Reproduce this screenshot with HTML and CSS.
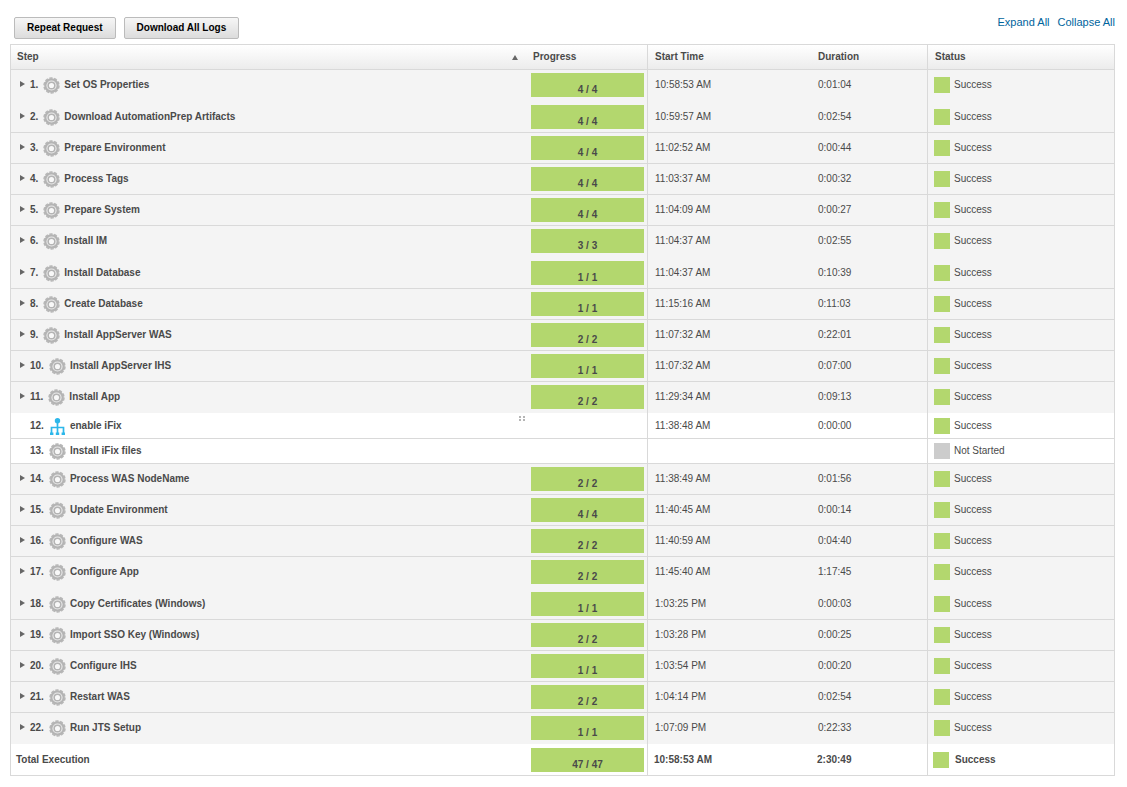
FILE: index.html
```html
<!DOCTYPE html>
<html lang="en">
<head>
<meta charset="utf-8">
<title>Execution</title>
<link rel="stylesheet" href="styles.css">
</head>
<body>
<svg class="sprite" aria-hidden="true">
  <symbol id="gear" viewBox="0 0 17 17">
    <circle cx="8.5" cy="8.5" r="7.5" fill="none" stroke="#b8b8b8" stroke-width="1.5" stroke-dasharray="3.2 1.512"/>
    <circle cx="8.5" cy="8.5" r="6.2" fill="#ebebeb" stroke="#b4b4b4" stroke-width="2.2"/>
    <circle cx="8.5" cy="8.5" r="3.3" fill="#f8f8f8" stroke="#b4b4b4" stroke-width="1.5"/>
  </symbol>
  <symbol id="tree" viewBox="0 0 17 17">
    <circle cx="8.5" cy="2.7" r="2.7" fill="#2db7ea"/>
    <path d="M8.5 5v10M2.5 15V9.5h12V15" fill="none" stroke="#2db7ea" stroke-width="1.7"/>
    <path d="M1 14.5h3.4v2.5H1zM6.8 14.5h3.4v2.5H6.8zM12.6 14.5H16v2.5h-3.4z" fill="#2db7ea"/>
  </symbol>
  <symbol id="arrow" viewBox="0 0 5 6"><path d="M0 0l5 3-5 3z" fill="#666"/></symbol>
</svg>
<main class="page">
  <header class="toolbar">
    <div class="actions">
      <button type="button" class="button">Repeat Request</button>
      <button type="button" class="button">Download All Logs</button>
    </div>
    <nav class="links"><a href="#expand">Expand All</a><a href="#collapse">Collapse All</a></nav>
  </header>
  <table class="grid">
    <colgroup><col><col class="col-progress"><col class="col-start"><col class="col-duration"><col class="col-status"></colgroup>
    <thead>
      <tr>
        <th scope="col"><div class="sortable">Step<svg class="sort" viewBox="0 0 6 5" aria-hidden="true"><path d="M3 0l3 5H0z" fill="#666"/></svg></div></th>
        <th scope="col" class="ruled">Progress</th>
        <th scope="col">Start Time</th>
        <th scope="col" class="ruled">Duration</th>
        <th scope="col">Status</th>
      </tr>
    </thead>
    <tbody>
      <tr class="open"><td><div class="step"><button type="button" class="toggle" aria-label="Expand step 1"><svg><use href="#arrow"/></svg></button><span>1.</span><svg class="icon"><use href="#gear"/></svg><span>Set OS Properties</span></div></td><td class="ruled"><div class="bar">4 / 4</div></td><td>10:58:53 AM</td><td class="ruled">0:01:04</td><td><div class="status">Success</div></td></tr>
      <tr><td><div class="step"><button type="button" class="toggle" aria-label="Expand step 2"><svg><use href="#arrow"/></svg></button><span>2.</span><svg class="icon"><use href="#gear"/></svg><span>Download AutomationPrep Artifacts</span></div></td><td class="ruled"><div class="bar">4 / 4</div></td><td>10:59:57 AM</td><td class="ruled">0:02:54</td><td><div class="status">Success</div></td></tr>
      <tr><td><div class="step"><button type="button" class="toggle" aria-label="Expand step 3"><svg><use href="#arrow"/></svg></button><span>3.</span><svg class="icon"><use href="#gear"/></svg><span>Prepare Environment</span></div></td><td class="ruled"><div class="bar">4 / 4</div></td><td>11:02:52 AM</td><td class="ruled">0:00:44</td><td><div class="status">Success</div></td></tr>
      <tr><td><div class="step"><button type="button" class="toggle" aria-label="Expand step 4"><svg><use href="#arrow"/></svg></button><span>4.</span><svg class="icon"><use href="#gear"/></svg><span>Process Tags</span></div></td><td class="ruled"><div class="bar">4 / 4</div></td><td>11:03:37 AM</td><td class="ruled">0:00:32</td><td><div class="status">Success</div></td></tr>
      <tr><td><div class="step"><button type="button" class="toggle" aria-label="Expand step 5"><svg><use href="#arrow"/></svg></button><span>5.</span><svg class="icon"><use href="#gear"/></svg><span>Prepare System</span></div></td><td class="ruled"><div class="bar">4 / 4</div></td><td>11:04:09 AM</td><td class="ruled">0:00:27</td><td><div class="status">Success</div></td></tr>
      <tr class="open"><td><div class="step"><button type="button" class="toggle" aria-label="Expand step 6"><svg><use href="#arrow"/></svg></button><span>6.</span><svg class="icon"><use href="#gear"/></svg><span>Install IM</span></div></td><td class="ruled"><div class="bar">3 / 3</div></td><td>11:04:37 AM</td><td class="ruled">0:02:55</td><td><div class="status">Success</div></td></tr>
      <tr><td><div class="step"><button type="button" class="toggle" aria-label="Expand step 7"><svg><use href="#arrow"/></svg></button><span>7.</span><svg class="icon"><use href="#gear"/></svg><span>Install Database</span></div></td><td class="ruled"><div class="bar">1 / 1</div></td><td>11:04:37 AM</td><td class="ruled">0:10:39</td><td><div class="status">Success</div></td></tr>
      <tr><td><div class="step"><button type="button" class="toggle" aria-label="Expand step 8"><svg><use href="#arrow"/></svg></button><span>8.</span><svg class="icon"><use href="#gear"/></svg><span>Create Database</span></div></td><td class="ruled"><div class="bar">1 / 1</div></td><td>11:15:16 AM</td><td class="ruled">0:11:03</td><td><div class="status">Success</div></td></tr>
      <tr><td><div class="step"><button type="button" class="toggle" aria-label="Expand step 9"><svg><use href="#arrow"/></svg></button><span>9.</span><svg class="icon"><use href="#gear"/></svg><span>Install AppServer WAS</span></div></td><td class="ruled"><div class="bar">2 / 2</div></td><td>11:07:32 AM</td><td class="ruled">0:22:01</td><td><div class="status">Success</div></td></tr>
      <tr><td><div class="step"><button type="button" class="toggle" aria-label="Expand step 10"><svg><use href="#arrow"/></svg></button><span>10.</span><svg class="icon"><use href="#gear"/></svg><span>Install AppServer IHS</span></div></td><td class="ruled"><div class="bar">1 / 1</div></td><td>11:07:32 AM</td><td class="ruled">0:07:00</td><td><div class="status">Success</div></td></tr>
      <tr class="last"><td><div class="step"><button type="button" class="toggle" aria-label="Expand step 11"><svg><use href="#arrow"/></svg></button><span>11.</span><svg class="icon"><use href="#gear"/></svg><span>Install App</span></div></td><td class="ruled"><div class="bar">2 / 2</div></td><td>11:29:34 AM</td><td class="ruled">0:09:13</td><td><div class="status">Success</div></td></tr>
      <tr class="leaf first"><td><div class="step"><span class="toggle"></span><span>12.</span><svg class="icon"><use href="#tree"/></svg><span>enable iFix</span><svg class="grip" viewBox="0 0 6 5" aria-hidden="true"><path d="M0 0h2v2H0zM4 0h2v2H4zM0 3h2v2H0zM4 3h2v2H4z" fill="#b5b5b5"/></svg></div></td><td class="ruled"></td><td>11:38:48 AM</td><td class="ruled">0:00:00</td><td><div class="status">Success</div></td></tr>
      <tr class="leaf"><td><div class="step"><span class="toggle"></span><span>13.</span><svg class="icon"><use href="#gear"/></svg><span>Install iFix files</span></div></td><td class="ruled"></td><td></td><td class="ruled"></td><td><div class="status pending">Not Started</div></td></tr>
      <tr><td><div class="step"><button type="button" class="toggle" aria-label="Expand step 14"><svg><use href="#arrow"/></svg></button><span>14.</span><svg class="icon"><use href="#gear"/></svg><span>Process WAS NodeName</span></div></td><td class="ruled"><div class="bar">2 / 2</div></td><td>11:38:49 AM</td><td class="ruled">0:01:56</td><td><div class="status">Success</div></td></tr>
      <tr><td><div class="step"><button type="button" class="toggle" aria-label="Expand step 15"><svg><use href="#arrow"/></svg></button><span>15.</span><svg class="icon"><use href="#gear"/></svg><span>Update Environment</span></div></td><td class="ruled"><div class="bar">4 / 4</div></td><td>11:40:45 AM</td><td class="ruled">0:00:14</td><td><div class="status">Success</div></td></tr>
      <tr><td><div class="step"><button type="button" class="toggle" aria-label="Expand step 16"><svg><use href="#arrow"/></svg></button><span>16.</span><svg class="icon"><use href="#gear"/></svg><span>Configure WAS</span></div></td><td class="ruled"><div class="bar">2 / 2</div></td><td>11:40:59 AM</td><td class="ruled">0:04:40</td><td><div class="status">Success</div></td></tr>
      <tr class="open"><td><div class="step"><button type="button" class="toggle" aria-label="Expand step 17"><svg><use href="#arrow"/></svg></button><span>17.</span><svg class="icon"><use href="#gear"/></svg><span>Configure App</span></div></td><td class="ruled"><div class="bar">2 / 2</div></td><td>11:45:40 AM</td><td class="ruled">1:17:45</td><td><div class="status">Success</div></td></tr>
      <tr><td><div class="step"><button type="button" class="toggle" aria-label="Expand step 18"><svg><use href="#arrow"/></svg></button><span>18.</span><svg class="icon"><use href="#gear"/></svg><span>Copy Certificates (Windows)</span></div></td><td class="ruled"><div class="bar">1 / 1</div></td><td>1:03:25 PM</td><td class="ruled">0:00:03</td><td><div class="status">Success</div></td></tr>
      <tr><td><div class="step"><button type="button" class="toggle" aria-label="Expand step 19"><svg><use href="#arrow"/></svg></button><span>19.</span><svg class="icon"><use href="#gear"/></svg><span>Import SSO Key (Windows)</span></div></td><td class="ruled"><div class="bar">2 / 2</div></td><td>1:03:28 PM</td><td class="ruled">0:00:25</td><td><div class="status">Success</div></td></tr>
      <tr><td><div class="step"><button type="button" class="toggle" aria-label="Expand step 20"><svg><use href="#arrow"/></svg></button><span>20.</span><svg class="icon"><use href="#gear"/></svg><span>Configure IHS</span></div></td><td class="ruled"><div class="bar">1 / 1</div></td><td>1:03:54 PM</td><td class="ruled">0:00:20</td><td><div class="status">Success</div></td></tr>
      <tr><td><div class="step"><button type="button" class="toggle" aria-label="Expand step 21"><svg><use href="#arrow"/></svg></button><span>21.</span><svg class="icon"><use href="#gear"/></svg><span>Restart WAS</span></div></td><td class="ruled"><div class="bar">2 / 2</div></td><td>1:04:14 PM</td><td class="ruled">0:02:54</td><td><div class="status">Success</div></td></tr>
      <tr class="last"><td><div class="step"><button type="button" class="toggle" aria-label="Expand step 22"><svg><use href="#arrow"/></svg></button><span>22.</span><svg class="icon"><use href="#gear"/></svg><span>Run JTS Setup</span></div></td><td class="ruled"><div class="bar">1 / 1</div></td><td>1:07:09 PM</td><td class="ruled">0:22:33</td><td><div class="status">Success</div></td></tr>
    </tbody>
    <tfoot>
      <tr><td>Total Execution</td><td class="ruled"><div class="bar">47 / 47</div></td><td>10:58:53 AM</td><td class="ruled">2:30:49</td><td><div class="status">Success</div></td></tr>
    </tfoot>
  </table>
</main>
</body>
</html>
```
FILE: styles.css
```css
* {
  box-sizing: border-box;
}

body {
  margin: 0;
  background: #fff;
  color: #4a4a4a;
  font: 10px/24px "Liberation Sans", Arial, sans-serif;
}

.sprite {
  display: none;
}

.page {
  padding: 17px 12px 11px 10px;
}

.toolbar {
  display: flex;
  justify-content: space-between;
  align-items: flex-start;
  padding-left: 4px;
  margin-bottom: 5px;
}

.actions,
.links {
  display: flex;
  gap: 8px;
}

.links {
  font-size: 11px;
  line-height: 10px;
}

.links a {
  color: #00649d;
  text-decoration: none;
}

.button {
  height: 22px;
  padding: 0 12px;
  border: 1px solid #bbb;
  border-radius: 2px;
  background: linear-gradient(#f6f6f6, #dcdcdc);
  color: #000;
  font: bold 10px/20px "Liberation Sans", Arial, sans-serif;
}

.grid {
  width: 100%;
  table-layout: fixed;
  border: 1px solid #d9d9d9;
  border-bottom: 0;
  border-collapse: separate;
  border-spacing: 0;
}

.col-progress { width: 121px; }
.col-start { width: 163px; }
.col-duration { width: 117px; }
.col-status { width: 186px; }

th,
td {
  border-bottom: 1px solid #d9d9d9;
  text-align: left;
  vertical-align: top;
  white-space: nowrap;
}

.ruled {
  border-right: 1px solid #d9d9d9;
}

th {
  height: 25px;
  padding: 0 6px;
  background: linear-gradient(#fff, #ececec);
}

th:nth-child(n + 3) {
  padding-left: 7px;
}

.sortable {
  display: flex;
  align-items: center;
  justify-content: space-between;
}

.sort {
  width: 6px;
  height: 5px;
  margin-right: 3px;
}

td {
  height: 31px;
  padding: 3px 6px 3px 7px;
  background: #f4f4f4;
}

td:nth-child(1) { padding-left: 9px; }
td:nth-child(2) { padding: 3px 3px 3px 4px; }
td:nth-child(5) { padding-left: 6px; }

.open td {
  height: 32px;
  border-bottom: 0;
}

.last td {
  border-bottom: 0;
}

.leaf td {
  height: 25px;
  padding-top: 0;
  padding-bottom: 0;
  background: #fff;
}

.first td {
  height: 26px;
  padding-top: 1px;
}

.step,
.status {
  display: flex;
  align-items: center;
}

.step {
  height: 24px;
  font-weight: bold;
}

.toggle {
  display: flex;
  width: 5px;
  height: 8px;
  margin-right: 5px;
  padding: 0;
  border: 0;
  background: none;
}

.toggle svg {
  width: 5px;
  height: 6px;
}

.icon {
  width: 17px;
  height: 17px;
  margin: 0 4px 0 5px;
}

.grip {
  align-self: flex-start;
  width: 6px;
  height: 5px;
  margin: 2px -4px 0 auto;
}

.bar {
  height: 24px;
  padding-top: 5px;
  background: #b3d76e;
  font-weight: bold;
  text-align: center;
  line-height: 24px;
}

.status {
  gap: 4px;
}

.status::before {
  content: "";
  width: 16px;
  height: 16px;
  background: #b3d76e;
}

.status.pending::before {
  background: #ccc;
}

tfoot td {
  height: 32px;
  padding: 4px 6px 3px;
  background: #fff;
  font-weight: bold;
}

tfoot td:nth-child(1),
tfoot td:nth-child(5) {
  padding-left: 5px;
}

tfoot td:nth-child(2) {
  padding-top: 4px;
}

tfoot .status {
  gap: 6px;
}
```
